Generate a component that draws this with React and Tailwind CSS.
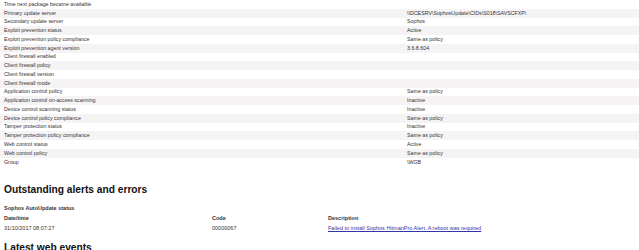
const rows = [
  ['Time next package became available', ''],
  ['Primary update server', '\\\\DCESRV\\SophosUpdate\\CIDs\\S018\\SAVSCFXP\\'],
  ['Secondary update server', 'Sophos'],
  ['Exploit prevention status', 'Active'],
  ['Exploit prevention policy compliance', 'Same as policy'],
  ['Exploit prevention agent version', '3.6.8.604'],
  ['Client firewall enabled', ''],
  ['Client firewall policy', ''],
  ['Client firewall version', ''],
  ['Client firewall mode', ''],
  ['Application control policy', 'Same as policy'],
  ['Application control on-access scanning', 'Inactive'],
  ['Device control scanning status', 'Inactive'],
  ['Device control policy compliance', 'Same as policy'],
  ['Tamper protection status', 'Inactive'],
  ['Tamper protection policy compliance', 'Same as policy'],
  ['Web control status', 'Active'],
  ['Web control policy', 'Same as policy'],
  ['Group', '\\WGB'],
];

export default function App() {
  return (
    <div className="w-[639px] h-[250px] overflow-hidden bg-white text-[#333] font-['Liberation_Sans',Arial,sans-serif]">
      <div className="flex flex-col">
        {rows.map(([label, value], i) => (
          <div
            key={label}
            className={`flex h-[8.77px] items-center text-[5.3px] leading-none ${i % 2 ? 'bg-[#f6f3f5]' : 'bg-white'}`}
          >
            <div className="w-[407px] pl-[4px]">{label}</div>
            <div className="flex-1">{value}</div>
          </div>
        ))}
      </div>

      <h2 className="mt-[18px] pl-[4px] text-[10.2px] font-bold leading-none text-[#111]">Outstanding alerts and errors</h2>

      <div className="mt-[11px] pl-[4px] text-[5.5px] font-bold leading-none">Sophos AutoUpdate status</div>
      <div className="mt-[4.5px] grid grid-cols-[208px_116px_1fr] gap-y-[4.5px] pl-[4px] text-[5.5px] leading-none">
        <div className="font-bold">Date/time</div>
        <div className="font-bold">Code</div>
        <div className="font-bold">Description</div>
        <div>31/10/2017 08:07:27</div>
        <div>00000067</div>
        <a href="#" className="text-[#3333aa] underline">Failed to install Sophos HitmanPro Alert. A reboot was required</a>
      </div>

      <h2 className="mt-[12px] pl-[4px] text-[10.2px] font-bold leading-none text-[#111]">Latest web events</h2>
    </div>
  );
}
